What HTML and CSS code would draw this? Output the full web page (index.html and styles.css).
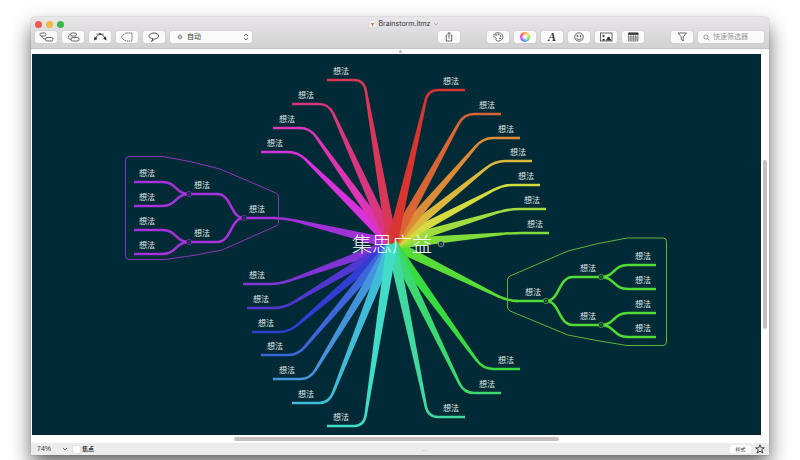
FILE: index.html
```html
<!DOCTYPE html>
<html lang="zh-CN">
<head>
<meta charset="utf-8">
<title>Brainstorm.itmz</title>
<link rel="stylesheet" href="styles.css">
</head>
<body>
<main class="window">
  <header class="chrome">
    <div class="titlebar">
      <div class="lights">
        <button class="light close" aria-label="关闭"></button>
        <button class="light minimise" aria-label="最小化"></button>
        <button class="light expand" aria-label="缩放"></button>
      </div>
      <h1 class="title">
        <svg class="doc" viewBox="0 0 7 8"><path d="M.5.5h4l2 2v5h-6z" fill="#fff" stroke="#d8cfc8" stroke-width=".5"/><path d="M3.500 6.500V4M2 3.500h3M2.500 4.500h2" stroke="#e0762c" stroke-width="1"/></svg>
        Brainstorm.itmz
        <svg class="caret" viewBox="0 0 6 4"><path d="M1 1l2 2 2-2" fill="none" stroke="#aaa" stroke-width=".8"/></svg>
      </h1>
      <div></div>
    </div>
    <div class="toolbar">
      <div class="group">
        <button class="tool" aria-label="子主题"><svg viewBox="0 0 22 12"><rect x="5" y="2" width="6" height="3" rx="1.500"/><rect x="10.500" y="6.500" width="7.500" height="3.500" rx="1.500"/><path d="M7 5c0 2 1 3 3.500 3"/></svg></button>
        <button class="tool" aria-label="同级主题"><svg viewBox="0 0 22 12"><rect x="8.500" y="2" width="6" height="3" rx="1.500"/><rect x="9" y="6.500" width="8" height="3.500" rx="1.500"/><path d="M8.500 3.500C5.500 4 5.500 8 9 8.500"/></svg></button>
        <button class="tool" aria-label="关系"><svg viewBox="0 0 22 12"><path d="M6.500 8C8 2 13.500 2 16 7" stroke-width="1"/><path d="M5 9.500l.5-4 3 2.500zM17.500 9.500l-.5-4-3 2z" fill="#333" stroke="none"/><path d="M7 3h8" stroke-width=".5"/><circle cx="11" cy="3" r=".8" fill="#333"/></svg></button>
        <button class="tool" aria-label="边界"><svg viewBox="0 0 22 12"><path d="M16 2h-6C8 3 6 4.500 5.500 6 6 7.500 8 9 10 10h6z" stroke-dasharray="1.500 .6"/></svg></button>
        <button class="tool" aria-label="标注"><svg viewBox="0 0 22 12"><path d="M8.500 7.500C4 6.500 6 2 11 2c6 0 6 5.500 1 5.800L8.500 10.500l1.500-3z" stroke-width=".9"/></svg></button>
        <label class="picker">
          <svg class="gear" viewBox="0 0 6 6"><circle cx="3" cy="3" r="1.400"/><circle cx="3" cy="3" r="2.200" stroke-dasharray=".7 .7"/></svg>
          <select class="mode" aria-label="布局"><option>自动</option></select>
          <svg class="updown" viewBox="0 0 6 8"><path d="M1 3l2-2 2 2M1 5l2 2 2-2"/></svg>
        </label>
      </div>
      <div class="sections">
        <button class="tool" aria-label="分享"><svg viewBox="0 0 22 12"><path d="M9.500 4H8.300v6h5.400V4h-1.200M11 7.500V1.500M9.500 3L11 1.500 12.500 3"/></svg></button>
        <div class="group">
          <button class="tool" aria-label="调色板"><svg viewBox="0 0 22 12"><path d="M8 6.500C6 6 6 2.500 10 1.800c4-.5 6 2 5.800 4.500-.3 3-4 4.500-6.300 3.200C8 8.500 10.500 7.500 8 6.500z"/><circle cx="9" cy="4" r=".5"/><circle cx="11.500" cy="3.500" r=".5"/><circle cx="13.600" cy="5" r=".5"/><circle cx="13" cy="7.500" r=".5"/></svg></button>
          <button class="tool" aria-label="颜色"><span class="wheel"></span></button>
          <button class="tool letter" aria-label="字体">A</button>
          <button class="tool" aria-label="贴纸"><svg viewBox="0 0 22 12"><circle cx="11" cy="6" r="4.200"/><circle cx="9.500" cy="5" r=".6" fill="#333"/><circle cx="12.500" cy="5" r=".6" fill="#333"/><path d="M8.500 7c1 2 4 2 5 0"/></svg></button>
          <button class="tool" aria-label="图片"><svg viewBox="0 0 22 12"><rect x="5.500" y="2" width="11.500" height="8"/><path d="M11 9.500l1.500-3 1.500-1 2.500 4zM7 9.500l1-1.500h1.500l1 1.500z" fill="#333" stroke="none"/><circle cx="8.500" cy="5" r=".8" fill="#333"/></svg></button>
          <button class="tool" aria-label="表格"><svg viewBox="0 0 22 12"><path d="M6.500 2h9.500v8H6.500zM6.500 6h9.500M6.500 8h9.500M8.900 4v6M11.300 4v6M13.700 4v6" stroke-width=".6"/><path d="M6.500 2h9.500v1.500H6.500z" fill="#333"/></svg></button>
        </div>
        <div class="group">
          <button class="tool" aria-label="筛选"><svg viewBox="0 0 22 12"><path d="M7 2h8.500l-3.300 4v4l-1.800-1.500V6z"/></svg></button>
          <label class="search">
            <svg class="lens" viewBox="0 0 8 8"><circle cx="3.400" cy="3.400" r="2.400"/><path d="M5.200 5.200L7.300 7.300"/></svg>
            <input class="query" type="text" placeholder="快速筛选器" aria-label="快速筛选器">
          </label>
        </div>
      </div>
    </div>
  </header>
  <div class="divider"><span class="grip"></span></div>
  <section class="work">
    <svg class="map" id="map" viewBox="32 54 729 381" role="img" aria-label="集思广益"></svg>
    <div class="vscroll"><div class="vthumb"></div></div>
  </section>
  <div class="hscroll"><div class="hthumb"></div></div>
  <footer class="status">
    <div class="status-left">
      <label class="zoom">
        <select class="percent" aria-label="缩放比例"><option>74%</option></select>
        <svg class="caret" viewBox="0 0 6 4"><path d="M1 1l2 2 2-2" fill="none" stroke="#555" stroke-width=".9"/></svg>
      </label>
      <label class="focus"><input class="tick" type="checkbox">焦点</label>
    </div>
    <span class="more">…</span>
    <div class="status-right">
      <button class="style">样式</button>
      <button class="fav" aria-label="收藏"><svg viewBox="0 0 10 10"><path d="M5 .8l1.200 3h3.100L6.800 5.700l1 3.300L5 7.100 2.200 9l1-3.300L.7 3.800h3.100z" fill="none" stroke="#333" stroke-width=".9"/></svg></button>
    </div>
  </footer>
</main>
<script src="map.js"></script>
</body>
</html>
```
FILE: styles.css
```css
* { box-sizing: border-box; }

body {
  margin: 0;
  padding: 17px 31px 5px;
  min-height: 100vh;
  overflow: hidden;
  background: #fff;
  color: #333;
  font-family: "Liberation Sans", "Noto Sans CJK SC", sans-serif;
  font-size: 7px;
  line-height: 12px;
}

button, select, input {
  margin: 0;
  padding: 0;
  border: 0;
  background: none;
  color: inherit;
  font: inherit;
  appearance: none;
}

svg { display: block; }

.window {
  border-radius: 4px 4px 0 0;
  background: #fff;
  box-shadow: 0 0 1px rgba(0, 0, 0, .5), 0 10px 20px rgba(0, 0, 0, .6);
}

.chrome {
  border-bottom: 1px solid #c4c4c4;
  border-radius: 4px 4px 0 0;
  background: linear-gradient(#e8e6e8, #d2d1d2);
}

.titlebar {
  display: grid;
  grid-template-columns: 1fr auto 1fr;
  align-items: center;
  height: 14px;
  padding: 0 4px;
}

.lights { display: flex; gap: 4px; }
.light { width: 7px; height: 7px; border-radius: 50%; }
.close { background: #f0574e; }
.minimise { background: #f2b93b; }
.expand { background: #35b844; }

.title {
  display: flex;
  align-items: center;
  gap: 3px;
  margin: 0;
  padding-left: 8px;
  font-family: Inter, sans-serif;
  font-size: 7px;
  font-weight: 400;
}
.doc { width: 7px; height: 8px; }
.caret { width: 6px; height: 4px; }

.toolbar {
  display: flex;
  justify-content: space-between;
  padding: 0 5px 5px 4px;
}
.group { display: flex; gap: 5px; }
.sections { display: flex; gap: 27px; }

.tool, .picker, .search {
  height: 12px;
  border-radius: 2px;
  background: #fafafa;
  box-shadow: 0 0 1px rgba(0, 0, 0, .25);
}
.tool { width: 22px; }
.tool svg, .gear, .updown, .lens {
  fill: none;
  stroke: #444;
  stroke-width: .8;
}
.tool svg { width: 22px; height: 12px; }
.wheel {
  display: block;
  width: 10px;
  height: 10px;
  margin: auto;
  border-radius: 50%;
  background: radial-gradient(#fff 10%, transparent 60%), conic-gradient(#fa4, #fd4, #6d5, #4cd, #56f, #c4f, #f46, #fa4);
}
.letter {
  color: #2c3444;
  font-family: "Liberation Serif", serif;
  font-size: 12px;
  font-style: italic;
  font-weight: 700;
}

.picker {
  display: flex;
  align-items: center;
  width: 82px;
  padding: 0 3px 0 7px;
}
.gear { width: 6px; height: 6px; stroke-width: .6; }
.mode { flex: 1; min-width: 0; padding-left: 4px; }
.updown { width: 6px; height: 8px; }

.search {
  display: flex;
  align-items: center;
  gap: 3px;
  width: 66px;
  padding: 0 5px;
}
.lens { width: 7px; height: 7px; stroke: #777; }
.query { flex: 1; min-width: 0; height: 12px; }
.query::placeholder { color: #999; opacity: 1; }

.divider {
  display: flex;
  align-items: center;
  justify-content: center;
  height: 5px;
  background: #fbfafb;
}
.grip { width: 3px; height: 3px; border-radius: 50%; background: #bbb; }

.work { display: flex; padding-left: 1px; }
.map {
  flex: 1;
  min-width: 0;
  background: #002b36;
  font-family: "Noto Sans CJK SC", sans-serif;
}
.label { fill: #e0e8ea; font-size: 8px; }
.core { fill: #fff; font-size: 20px; font-weight: 300; }
.knob { fill: #002b36; stroke-width: .6; }

.vscroll { width: 8px; padding: 0 2px; }
.vthumb { height: 169px; margin-top: 106px; border-radius: 2px; background: #c2c0c0; }
.hscroll { height: 8px; padding: 2px 0; }
.hthumb { width: 44%; height: 4px; margin-left: 27.5%; border-radius: 2px; background: #c6bfbf; }

.status {
  display: grid;
  grid-template-columns: 1fr auto 1fr;
  align-items: center;
  height: 12px;
  padding: 0 4px 0 6px;
  background: #ececec;
}
.status-left, .status-right, .zoom, .focus { display: flex; align-items: center; }
.status-left { gap: 5px; }
.status-right { justify-content: flex-end; gap: 4px; }
.zoom { width: 31px; }
.percent { flex: 1; min-width: 0; }
.focus { gap: 2px; font-size: 6px; font-weight: 700; }
.tick { width: 7px; height: 7px; border-radius: 1px; background: #fff; box-shadow: 0 0 1px rgba(0, 0, 0, .5); }
.more { padding-left: 48px; color: #999; }
.style {
  width: 21px;
  height: 8px;
  border-radius: 2px;
  background: #fff;
  font-size: 5px;
  line-height: 8px;
}
.fav svg { width: 10px; height: 10px; }
```
FILE: map.js
```js
const map = document.getElementById("map");
const core = { x: 392, y: 244 };
const FLAT = 37;
const DARK = "#002b36";

// Outer end of each branch, its side of the map (-1 left, 1 right) and colour.
const branches = [
  [284, 218, -1, "#a032d8", true], [508, 301, 1, "#58dc38", true],
  [243, 284, -1, "#8034d6"], [247, 308, -1, "#5236d2"], [252, 332, -1, "#303cd2"],
  [261, 355, -1, "#3c66da"], [273, 379, -1, "#4494dc"], [292, 403, -1, "#40bcd8"],
  [549, 233, 1, "#80dc38"], [546, 209, 1, "#a0dc40"], [540, 185, 1, "#d4dc40"],
  [532, 161, 1, "#dcb83c"], [520, 138, 1, "#dc8c36"], [501, 114, 1, "#d96434"],
  [261, 152, -1, "#d832dc"], [273, 128, -1, "#dc36b4"], [292, 104, -1, "#d93682"],
  [327, 80, -1, "#d93658"], [465, 90, 1, "#d93430"],
  [520, 369, 1, "#38dc40"], [501, 393, 1, "#3cd970"], [465, 417, 1, "#40d9a0"],
  [327, 426, -1, "#40dcc8"]
];

const parts = [];
const stroke = (d, color, width) =>
  parts.push(`<path d="${d}" fill="none" stroke="${color}" stroke-width="${width}"/>`);
const label = (x, y) => parts.push(`<text class="label" x="${x}" y="${y - 6}">想法</text>`);

function branch([x, y, side, color, grouped]) {
  const cx = grouped ? x : x - side * FLAT;
  const dx = core.x - cx, dy = core.y - y, len = Math.hypot(dx, dy);
  const ux = dx / len, uy = dy / len, bend = 10;
  const bx = cx + ux * bend, by = y + uy * bend;
  const n = (px, py, w) => `${px - uy * w} ${py + ux * w}`;
  parts.push(`<path d="M${n(bx, by, 1.3)}L${n(core.x, core.y, 5.5)}L${n(core.x, core.y, -5.5)}L${n(bx, by, -1.3)}z" fill="${color}"/>`);
  const start = grouped ? cx + side * bend : x;
  stroke(`M${start} ${y}H${cx + side * bend}Q${cx} ${y} ${bx + ux} ${by + uy}`, color, 2.5);
  if (!grouped) label(side < 0 ? x + 6 : x - 22, y);
}

function tree(x, y, side, color) {
  const knob = (kx, ky) => parts.push(
    `<circle class="knob" cx="${kx}" cy="${ky}" r="2.7" stroke="${color}"/><path d="M${kx - 1.2} ${ky}h2.400" stroke="${color}" stroke-width=".7"/>`);
  const fork = (fx, fy, spread, length) => [-spread, spread].forEach(s =>
    stroke(`M${fx} ${fy}C${fx + side * 14} ${fy} ${fx + side * 12} ${fy + s} ${fx + side * 27} ${fy + s}h${side * length}`, color, 2.5));
  const text = (kx, ky) => label(side < 0 ? kx + 5 : kx - 21, ky);
  stroke(`M${x} ${y}H${x - side * 31}`, color, 2.5);
  fork(x, y, 24, 28);
  text(x, y);
  [-24, 24].forEach(s => {
    const sx = x + side * 55, sy = y + s;
    fork(sx, sy, 12, 28);
    text(sx, sy);
    [-12, 12].forEach(t => text(sx + side * 55, sy + t));
    knob(sx, sy);
  });
  knob(x, y);
}

branches.forEach(branch);
tree(244, 218, -1, "#a832dc");
tree(546, 301, 1, "#50dc34");

stroke("M129 156.500H163Q192 161 220 169L276 193Q278.500 194.500 278.500 197V222Q278.500 225 276 226L222 250Q194 256 165 259.500H129Q125.500 259.500 125.500 256V160Q125.500 156.500 129 156.500z", "#8c38b8", 1);
stroke("M663 238H627Q597 243 568 251L510 276Q507.500 277.500 507.500 280V307Q507.500 309.500 510 311L568 335Q597 341 627 345.500H663Q666.500 345.500 666.500 342V241.500Q666.500 238 663 238z", "#58b43c", 1);

parts.push(`<text class="core" x="352" y="252">集思广益</text>`);
parts.push(`<circle cx="441" cy="244" r="2.800" fill="${DARK}" stroke="#a0b4a0" stroke-width=".8"/><path d="M439.800 244h2.400" stroke="#a0b4a0" stroke-width=".7"/>`);
map.innerHTML = parts.join("");
```
